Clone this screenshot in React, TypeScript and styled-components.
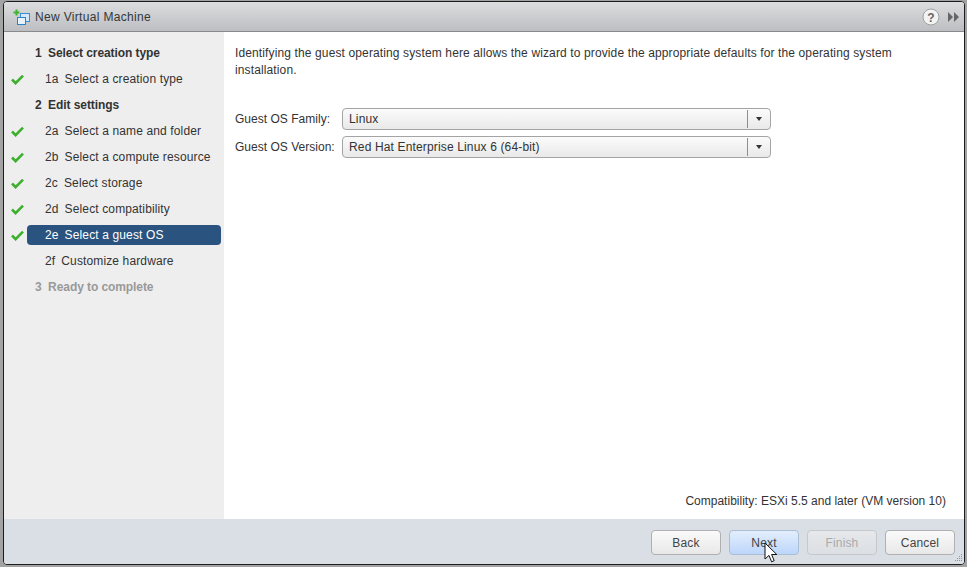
import React from "react";
import styled, { createGlobalStyle } from "styled-components";

const GlobalStyle = createGlobalStyle`
  html, body {
    margin: 0;
    padding: 0;
    width: 967px;
    height: 567px;
    overflow: hidden;
    background: #a3a3a3;
    font-family: "Liberation Sans", Arial, sans-serif;
    font-size: 12px;
    color: #333;
  }
`;

const Page = styled.div`
  width: 967px;
  height: 567px;
  box-sizing: border-box;
  padding: 1px 2px 2px 3px;
`;

const Dialog = styled.div`
  height: 100%;
  box-sizing: border-box;
  border: 1px solid #1c1c1c;
  border-radius: 4px;
  overflow: hidden;
  display: flex;
  flex-direction: column;
  background: #fff;
  position: relative;
`;

const TitleBar = styled.div`
  height: 30px;
  flex: none;
  box-sizing: border-box;
  border-bottom: 1px solid #8a8a8a;
  background: linear-gradient(#dcdddf, #bcbec1);
  display: flex;
  align-items: center;
  padding: 0 4px 0 9px;
`;

const TitleText = styled.span`
  margin-left: 5px;
  font-size: 12px;
  letter-spacing: 0.33px;
  color: #33373a;
  flex: 1;
`;

const Body = styled.div`
  flex: 1;
  display: flex;
  min-height: 0;
`;

const Sidebar = styled.ul`
  width: 220px;
  flex: none;
  box-sizing: border-box;
  margin: 0;
  padding: 8px 0 0;
  list-style: none;
  background: #eeeeee;
`;

const Row = styled.li`
  height: 26px;
  display: flex;
  align-items: center;
`;

const CheckSlot = styled.span`
  width: 23px;
  flex: none;
  display: flex;
  padding-left: 7px;
  box-sizing: border-box;
`;

const Heading = styled.span<{ $muted?: boolean }>`
  margin-left: 8px;
  font-weight: bold;
  letter-spacing: -0.08px;
  color: ${(p) => (p.$muted ? "#999" : "#333")};
  white-space: pre;
`;

const Step = styled.span<{ $active?: boolean }>`
  width: 194px;
  height: 20px;
  line-height: 20px;
  box-sizing: border-box;
  padding-left: 18px;
  border-radius: 4px;
  letter-spacing: 0.13px;
  white-space: pre;
  color: ${(p) => (p.$active ? "#fff" : "#333")};
  background: ${(p) => (p.$active ? "#2b5380" : "transparent")};
`;

const StepCode = styled.span`
  margin-right: 6px;
`;

const Content = styled.div`
  flex: 1;
  display: flex;
  flex-direction: column;
  box-sizing: border-box;
  padding: 13px 18px 11px 11px;
  background: #fff;
`;

const Intro = styled.p`
  margin: 0 0 29px;
  line-height: 17px;
  letter-spacing: 0.125px;
  color: #333;
`;

const FormGrid = styled.div`
  display: grid;
  grid-template-columns: 107px 429px;
  row-gap: 6px;
  align-items: center;
`;

const FieldLabel = styled.label`
  letter-spacing: 0.02px;
  color: #333;
`;

const Select = styled.div`
  height: 22px;
  box-sizing: border-box;
  border: 1px solid #a4a4a4;
  border-radius: 4px;
  background: linear-gradient(#fbfbfb, #e9e9e9);
  display: flex;
  align-items: center;
`;

const SelectValue = styled.span`
  flex: 1;
  padding-left: 6px;
  letter-spacing: 0.15px;
  color: #333;
`;

const SelectArrow = styled.span`
  width: 23px;
  height: 18px;
  box-sizing: border-box;
  border-left: 1px solid #8e8e8e;
  display: flex;
  align-items: center;
  justify-content: center;
  &::after {
    content: "";
    border-left: 3.5px solid transparent;
    border-right: 3.5px solid transparent;
    border-top: 4px solid #333;
  }
`;

const Compatibility = styled.div`
  margin-top: auto;
  text-align: right;
  letter-spacing: 0.01px;
  color: #333;
`;

const Footer = styled.div`
  height: 45px;
  flex: none;
  box-sizing: border-box;
  background: #dadee5;
  display: flex;
  align-items: flex-start;
  justify-content: flex-end;
  gap: 8px;
  padding: 11px 9px 0 0;
`;

const Button = styled.button<{ $hover?: boolean }>`
  width: 70px;
  height: 25px;
  padding: 0;
  box-sizing: border-box;
  border: 1px solid ${(p) => (p.$hover ? "#a9bed2" : "#b0b0b0")};
  border-radius: 4px;
  font: inherit;
  letter-spacing: 0.15px;
  color: #444;
  background: ${(p) =>
    p.$hover
      ? "linear-gradient(#e3eefc, #bdd6fb)"
      : "linear-gradient(#fafafa, #e8e8e8)"};
  &:disabled {
    color: #aaa;
    border-color: #c6c9cc;
    background: linear-gradient(#e6e8eb, #dcdfe3);
  }
`;

const Grip = styled.svg`
  position: absolute;
  right: 1px;
  bottom: 1px;
`;

const Cursor = styled.svg`
  position: absolute;
  left: 760px;
  bottom: 0;
`;

const HelpIcon = styled.svg`
  flex: none;
`;

const CollapseIcon = styled.svg`
  flex: none;
  margin-left: 8px;
`;

const VmIcon = () => (
  <svg width="17" height="16" viewBox="0 0 17 16">
    <rect x="7.5" y="4.5" width="9" height="8" fill="#d3e9f8" stroke="#3b8fd0" />
    <rect x="4.5" y="8.5" width="8" height="7" fill="#e6f3fc" stroke="#2f82c4" />
    <path d="M3.5 0.5v6M0.5 3.5h6" stroke="#3fb52f" strokeWidth="2" />
  </svg>
);

const Check = () => (
  <svg width="13" height="11" viewBox="0 0 13 11">
    <path d="M1 5.5l3.6 3.6L12 1.6" fill="none" stroke="#3cb02c" strokeWidth="2.6" />
  </svg>
);

const rows = [
  { heading: "1  Select creation type" },
  { code: "1a", step: "Select a creation type", done: true },
  { heading: "2  Edit settings" },
  { code: "2a", step: "Select a name and folder", done: true },
  { code: "2b", step: "Select a compute resource", done: true },
  { code: "2c", step: "Select storage", done: true },
  { code: "2d", step: "Select compatibility", done: true },
  { code: "2e", step: "Select a guest OS", done: true, active: true },
  { code: "2f", step: "Customize hardware" },
  { heading: "3  Ready to complete", muted: true },
];

export default function App() {
  return (
    <Page>
      <GlobalStyle />
      <Dialog>
        <TitleBar>
          <VmIcon />
          <TitleText>New Virtual Machine</TitleText>
          <HelpIcon width="18" height="18" viewBox="0 0 18 18">
            <circle cx="9" cy="9" r="8" fill="#f3f3f3" stroke="#a0a0a0" />
            <text x="9" y="13.5" textAnchor="middle" fontSize="12" fontWeight="bold" fontFamily="Liberation Sans" fill="#666">
              ?
            </text>
          </HelpIcon>
          <CollapseIcon width="12" height="10" viewBox="0 0 12 10">
            <path d="M0 0l5 5-5 5zM6 0l5 5-5 5z" fill="#666" />
          </CollapseIcon>
        </TitleBar>
        <Body>
          <Sidebar>
            {rows.map((r, i) => (
              <Row key={i}>
                <CheckSlot>{r.done && <Check />}</CheckSlot>
                {r.heading ? (
                  <Heading $muted={r.muted}>{r.heading}</Heading>
                ) : (
                  <Step $active={r.active}>
                    <StepCode>{r.code}</StepCode>
                    {r.step}
                  </Step>
                )}
              </Row>
            ))}
          </Sidebar>
          <Content>
            <Intro>
              Identifying the guest operating system here allows the wizard to provide the appropriate defaults for the operating system installation.
            </Intro>
            <FormGrid>
              <FieldLabel>Guest OS Family:</FieldLabel>
              <Select>
                <SelectValue>Linux</SelectValue>
                <SelectArrow />
              </Select>
              <FieldLabel>Guest OS Version:</FieldLabel>
              <Select>
                <SelectValue>Red Hat Enterprise Linux 6 (64-bit)</SelectValue>
                <SelectArrow />
              </Select>
            </FormGrid>
            <Compatibility>Compatibility: ESXi 5.5 and later (VM version 10)</Compatibility>
          </Content>
        </Body>
        <Footer>
          <Button>Back</Button>
          <Button $hover>Next</Button>
          <Button disabled>Finish</Button>
          <Button>Cancel</Button>
        </Footer>
        <Grip width="10" height="10" viewBox="0 0 10 10">
          <path d="M8 1h1v1H8zM6 3h1v1H6zM8 3h1v1H8zM4 5h1v1H4zM6 5h1v1H6zM8 5h1v1H8zM2 7h1v1H2zM4 7h1v1H4zM6 7h1v1H6zM8 7h1v1H8z" fill="#8d9196" />
        </Grip>
        <Cursor width="14" height="22" viewBox="0 0 14 22">
          <path d="M1 1v16l4-3.6 2.6 6.4 2.6-1.1-2.6-6.2h5.2z" fill="#fff" stroke="#111" strokeWidth="1" />
        </Cursor>
      </Dialog>
    </Page>
  );
}
